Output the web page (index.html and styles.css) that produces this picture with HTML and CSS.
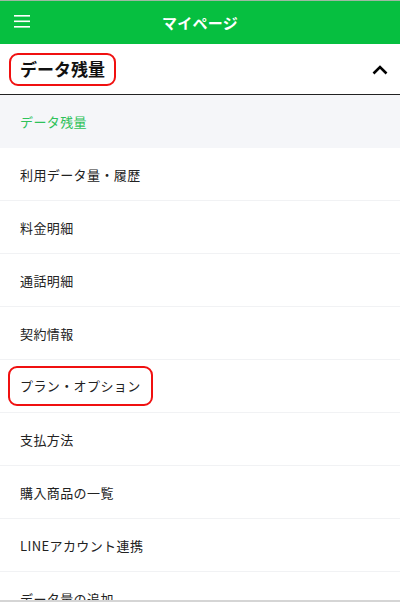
FILE: index.html
```html
<!DOCTYPE html>
<html lang="ja">

<head>
  <meta charset="UTF-8">
  <meta name="viewport" content="width=device-width, initial-scale=1.0">
  <title>マイページ</title>
  <link rel="stylesheet" href="styles.css">
</head>

<body>
  <div class="topbar">
    <div class="menu_btn">
      <svg width="16" height="14" viewBox="0 0 16 14">
        <rect x="0" y="1" width="16" height="1.6" fill="#fff" />
        <rect x="0" y="6.5" width="16" height="1.6" fill="#fff" />
        <rect x="0" y="12" width="16" height="1.6" fill="#fff" />
      </svg>
    </div>
    <h1 class="topbar__title">マイページ</h1>
  </div>

  <div class="section_head">
    <span class="mark mark--head">データ残量</span>
    <svg class="chevron" width="16" height="10" viewBox="0 0 16 10">
      <polyline points="1.5,8.5 8,2 14.5,8.5" fill="none" stroke="#000" stroke-width="2.6" />
    </svg>
  </div>

  <ul class="menu_list">
    <li class="menu_item menu_item--active">データ残量</li>
    <li class="menu_item">利用データ量・履歴</li>
    <li class="menu_item">料金明細</li>
    <li class="menu_item">通話明細</li>
    <li class="menu_item">契約情報</li>
    <li class="menu_item"><span class="mark mark--item">プラン・オプション</span></li>
    <li class="menu_item">支払方法</li>
    <li class="menu_item">購入商品の一覧</li>
    <li class="menu_item">LINEアカウント連携</li>
    <li class="menu_item">データ量の追加</li>
  </ul>
  <div class="bottom_line"></div>
</body>

</html>
```

FILE: styles.css
```css
body {
  margin: 0;
  width: 400px;
  height: 602px;
  overflow: hidden;
  position: relative;
  background-color: #fff;
  font-family: "Noto Sans CJK JP", "Noto Sans", sans-serif;
  color: #222;
}

.topbar {
  display: flex;
  align-items: center;
  justify-content: center;
  height: 43px;
  border-top: 1px solid #9db8a3;
  background-color: #06bf40;
  position: relative;
}

.menu_btn {
  position: absolute;
  left: 14px;
  top: 13px;
  display: flex;
}

.topbar__title {
  margin: 0;
  font-size: 15px;
  font-weight: 700;
  color: #fff;
  letter-spacing: 0.3px;
}

.section_head {
  display: flex;
  align-items: center;
  justify-content: space-between;
  height: 50px;
  padding: 0 12px 0 9px;
  border-bottom: 1px solid #222;
}

.mark {
  border: 2px solid #f01010;
  border-radius: 9px;
}

.mark--head {
  font-size: 17px;
  font-weight: 700;
  color: #111;
  padding: 2px 9px 3px 9px;
  line-height: 24px;
}

.chevron {
  margin-top: 2px;
}

.menu_list {
  list-style: none;
  margin: 0;
  padding: 0;
}

.menu_item {
  display: flex;
  align-items: center;
  height: 52px;
  padding: 0 20px;
  border-bottom: 1px solid #f1f2f4;
  font-size: 13px;
  color: #222;
  letter-spacing: 0.4px;
}

.menu_item--active {
  background-color: #f5f6f9;
  color: #2fc25a;
  border-bottom-color: #f5f6f9;
}

.mark--item {
  margin-left: -12px;
  padding: 8px 10px 8px 10px;
  line-height: 20px;
}

.bottom_line {
  position: absolute;
  left: 0;
  right: 0;
  top: 600px;
  height: 2px;
  background-color: #d5d5d5;
}
```
